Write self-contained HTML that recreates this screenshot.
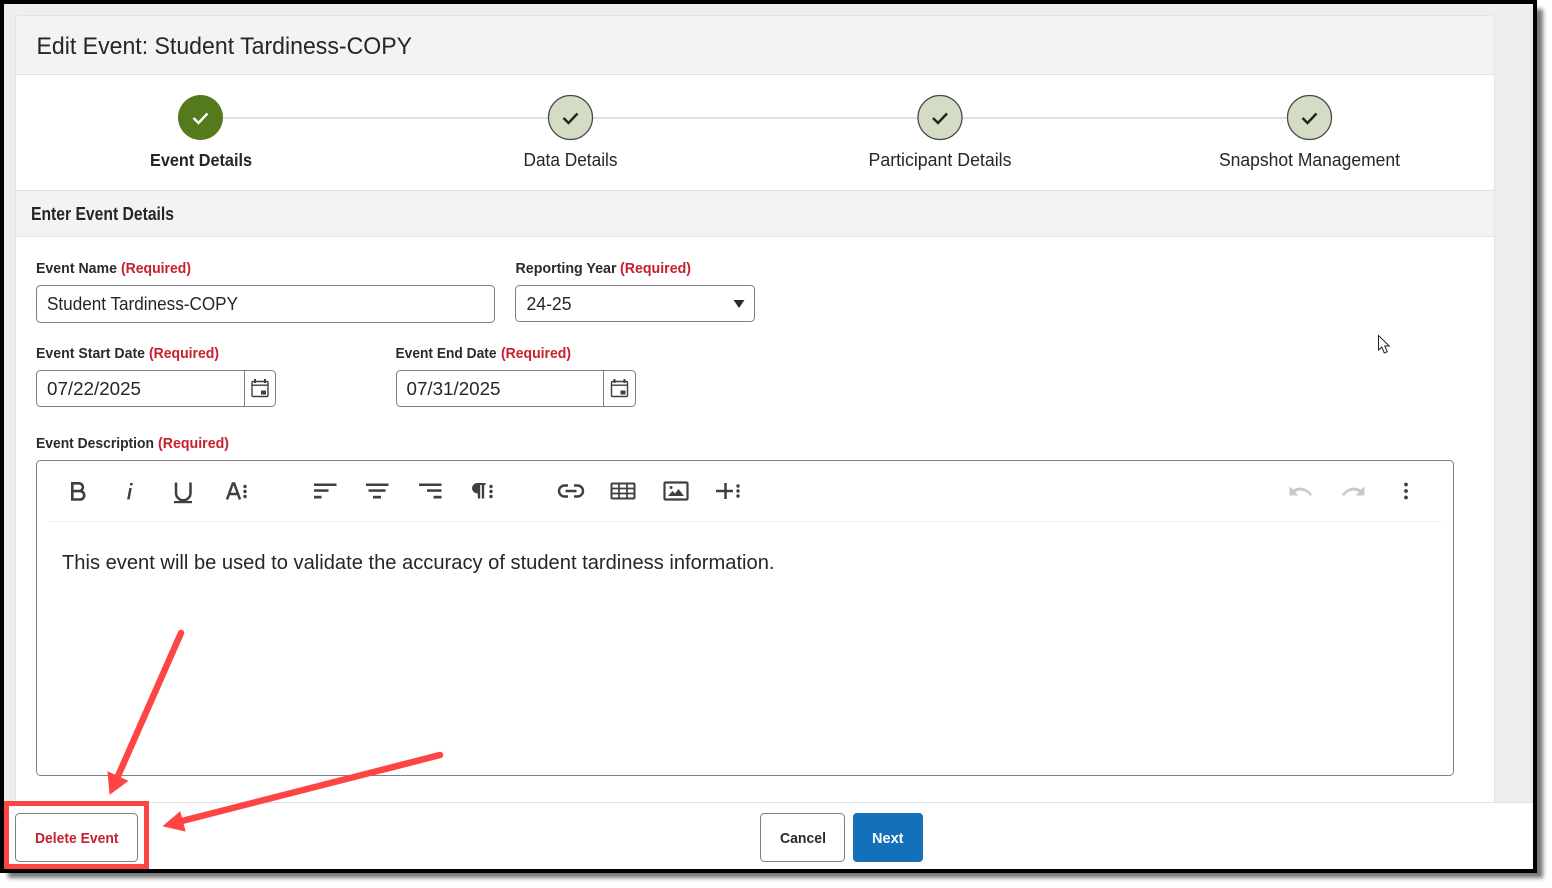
<!DOCTYPE html>
<html><head><meta charset="utf-8"><title>Edit Event</title>
<style>
html,body{margin:0;padding:0;background:#fff;width:1552px;height:888px;overflow:hidden}
svg{display:block;font-family:"Liberation Sans",sans-serif}
.t{fill:#262626}
.b{font-weight:bold}
.lab{font-size:14.8px;font-weight:bold;fill:#2b2b2b}
.req{font-size:14.8px;font-weight:bold;fill:#c5202e}
.ic{fill:none;stroke:#3f3f3f;stroke-width:2}
.f{fill:#3f3f3f}
</style></head><body>
<svg width="1552" height="888" viewBox="0 0 1552 888" xmlns="http://www.w3.org/2000/svg">
<defs><filter id="s" x="-2%" y="-2%" width="104%" height="104%"><feGaussianBlur stdDeviation="2"/></filter></defs>
<rect x="8" y="9" width="1535" height="869" fill="#777" filter="url(#s)"/>
<rect x="0" y="0" width="1537" height="873" fill="#000"/>
<rect x="4" y="4" width="1529" height="865" fill="#eeeeee"/>
<!-- panel -->
<rect x="15.500" y="15.500" width="1479" height="800" rx="4" fill="#fff" stroke="#e3e3e3"/>
<path d="M16 74V19.500a3.500 3.500 0 0 1 3.500-3.500H1490.500a3.500 3.500 0 0 1 3.500 3.500V74z" fill="#f3f3f3"/>
<rect x="16" y="74" width="1478" height="1" fill="#e2e2e2"/>
<text x="36.500" y="54" class="t" font-size="24.500" textLength="375.500" lengthAdjust="spacingAndGlyphs">Edit Event: Student Tardiness-COPY</text>
<!-- stepper -->
<rect x="223" y="117" width="1064" height="2" fill="#dfdfdf"/>
<circle cx="200.500" cy="117.500" r="22.500" fill="#557a1c"/>
<path d="M193.500 118l5 5 9-9.500" fill="none" stroke="#fff" stroke-width="2.400"/>
<g fill="#d4dcc6" stroke="#4a4a4a" stroke-width="1.300">
<circle cx="570.500" cy="117.500" r="22"/><circle cx="940" cy="117.500" r="22"/><circle cx="1309.500" cy="117.500" r="22"/>
</g>
<g fill="none" stroke="#222" stroke-width="2.400">
<path d="M563.500 118l5 5 9-9.500"/><path d="M933 118l5 5 9-9.500"/><path d="M1302.500 118l5 5 9-9.500"/>
</g>
<text x="150" y="166" class="t b" font-size="17.500" textLength="102" lengthAdjust="spacingAndGlyphs">Event Details</text>
<text x="523.500" y="166" class="t" font-size="18" textLength="94" lengthAdjust="spacingAndGlyphs">Data Details</text>
<text x="868.500" y="166" class="t" font-size="18" textLength="143" lengthAdjust="spacingAndGlyphs">Participant Details</text>
<text x="1219" y="166" class="t" font-size="18" textLength="181" lengthAdjust="spacingAndGlyphs">Snapshot Management</text>
<!-- section header -->
<rect x="16" y="190" width="1478" height="47" fill="#f3f3f3"/>
<rect x="16" y="190" width="1478" height="1" fill="#e2e2e2"/>
<rect x="16" y="236" width="1478" height="1" fill="#e2e2e2"/>
<text x="31" y="220" class="t b" font-size="18" textLength="143" lengthAdjust="spacingAndGlyphs">Enter Event Details</text>
<!-- labels -->
<text x="36" y="273" class="lab" textLength="81" lengthAdjust="spacingAndGlyphs">Event Name</text>
<text x="121" y="273" class="req" textLength="70" lengthAdjust="spacingAndGlyphs">(Required)</text>
<text x="515.500" y="273" class="lab" textLength="101" lengthAdjust="spacingAndGlyphs">Reporting Year</text>
<text x="620" y="273" class="req" textLength="71" lengthAdjust="spacingAndGlyphs">(Required)</text>
<text x="36" y="358" class="lab" textLength="109" lengthAdjust="spacingAndGlyphs">Event Start Date</text>
<text x="149" y="358" class="req" textLength="70" lengthAdjust="spacingAndGlyphs">(Required)</text>
<text x="395.500" y="358" class="lab" textLength="101" lengthAdjust="spacingAndGlyphs">Event End Date</text>
<text x="501" y="358" class="req" textLength="70" lengthAdjust="spacingAndGlyphs">(Required)</text>
<text x="36" y="448" class="lab" textLength="118" lengthAdjust="spacingAndGlyphs">Event Description</text>
<text x="158" y="448" class="req" textLength="71" lengthAdjust="spacingAndGlyphs">(Required)</text>
<!-- inputs -->
<g fill="#fff" stroke="#808080">
<rect x="36.500" y="285.500" width="458" height="37" rx="4"/>
<rect x="515.500" y="285.500" width="239" height="36" rx="4"/>
<rect x="36.500" y="370.500" width="239" height="36" rx="4"/>
<rect x="396.500" y="370.500" width="239" height="36" rx="4"/>
<rect x="36.500" y="460.500" width="1417" height="315" rx="4"/>
</g>
<rect x="244" y="371" width="1" height="35" fill="#808080"/>
<rect x="603" y="371" width="1" height="35" fill="#808080"/>
<text x="47" y="310" class="t" font-size="18" textLength="191" lengthAdjust="spacingAndGlyphs">Student Tardiness-COPY</text>
<text x="526.500" y="310" class="t" font-size="18" textLength="45" lengthAdjust="spacingAndGlyphs">24-25</text>
<path d="M733.500 300h11l-5.500 8z" fill="#2b2b2b"/>
<text x="47" y="395" class="t" font-size="18" textLength="94" lengthAdjust="spacingAndGlyphs">07/22/2025</text>
<text x="406.500" y="395" class="t" font-size="18" textLength="94" lengthAdjust="spacingAndGlyphs">07/31/2025</text>
<!-- calendar icons -->
<g>
<rect x="252" y="381.500" width="16" height="15" rx="1" class="ic" style="stroke-width:1.400"/>
<rect x="252" y="384.500" width="16" height="1.400" class="f"/>
<rect x="254" y="379" width="2" height="4" class="f"/><rect x="264" y="379" width="2" height="4" class="f"/>
<rect x="261" y="390.500" width="5" height="4" class="f"/>
</g>
<g transform="translate(359.500 0)">
<rect x="252" y="381.500" width="16" height="15" rx="1" class="ic" style="stroke-width:1.400"/>
<rect x="252" y="384.500" width="16" height="1.400" class="f"/>
<rect x="254" y="379" width="2" height="4" class="f"/><rect x="264" y="379" width="2" height="4" class="f"/>
<rect x="261" y="390.500" width="5" height="4" class="f"/>
</g>
<!-- toolbar -->
<rect x="48" y="521" width="1394" height="1" fill="#efefef"/>
<path d="M72.300 483.300h6.700a3.900 3.900 0 0 1 0 7.800h-6.700zM72.300 491.100h7.700a4.200 4.200 0 0 1 0 8.400h-7.700z" class="ic" style="stroke-width:2.600"/>
<path d="M129.300 488h2.500l-2.200 11.500h-2.500zM130.300 483h2.600l-.5 2.400h-2.600z" class="f"/>
<path d="M176 482.500v10.500a7 7 0 0 0 14.500 0v-10.500" class="ic" style="stroke-width:2.500"/>
<rect x="174" y="501" width="18" height="2.200" class="f"/>
<path d="M227 499.500l5.800-16h1.400l5.800 16M229 494h9" class="ic" style="stroke-width:2.500"/>
<g class="f"><circle cx="245" cy="486.500" r="1.700"/><circle cx="245" cy="491.500" r="1.700"/><circle cx="245" cy="496.500" r="1.700"/></g>
<g class="f">
<rect x="314" y="483.500" width="22.500" height="2.500"/><rect x="314" y="489.300" width="14.500" height="2.500"/><rect x="314" y="495.800" width="7.500" height="2.700"/>
<rect x="366" y="483.500" width="22.500" height="2.500"/><rect x="368.500" y="489.300" width="17" height="2.500"/><rect x="373" y="495.800" width="8" height="2.700"/>
<rect x="419" y="483.500" width="22.500" height="2.500"/><rect x="427" y="489.300" width="14.500" height="2.500"/><rect x="433.500" y="495.800" width="8" height="2.700"/>
</g>
<path d="M472 488.500a5.500 5.500 0 0 1 5.500-5.500h8v2h-1.300v13.500h-2.400v-13.500h-1.600v13.500h-2.400v-5a5.500 5.500 0 0 1-5.800-5z" class="f"/>
<g class="f"><circle cx="491" cy="486.500" r="1.700"/><circle cx="491" cy="491.500" r="1.700"/><circle cx="491" cy="496.500" r="1.700"/></g>
<path d="M568 485.500h-3.500a5.500 5.500 0 0 0 0 11H568M574 485.500h3.500a5.500 5.500 0 0 1 0 11H574M565.500 491h11" class="ic" style="stroke-width:2.400"/>
<rect x="611.500" y="483.500" width="23" height="15" rx="1" class="ic"/>
<path d="M611.500 488.500h23M611.500 493.500h23M619 483.500v15M627 483.500v15" class="ic" style="stroke-width:1.700"/>
<rect x="664.500" y="482.500" width="23" height="17" rx="1" class="ic" style="stroke-width:2.200"/>
<circle cx="671" cy="487.500" r="1.500" class="f"/>
<path d="M668 496l4.500-5 2.500 2.500 3.500-4.500 5.500 7z" class="f"/>
<path d="M725.500 483v16M716 491h17" class="ic" style="stroke-width:2.500"/>
<g class="f"><circle cx="738" cy="486" r="1.700"/><circle cx="738" cy="491" r="1.700"/><circle cx="738" cy="496" r="1.700"/></g>
<path d="M1289.500 486.500v9h9l-3.300-3.300c5-3 11.500-1.500 14.800 3.800l2-1.200c-4-7-12.800-9.300-18.800-5.200z" fill="#c9c9c9"/>
<path d="M1364.500 486.500v9h-9l3.300-3.300c-5-3-11.500-1.500-14.800 3.800l-2-1.200c4-7 12.800-9.300 18.800-5.200z" fill="#c9c9c9"/>
<g class="f"><circle cx="1406" cy="484.500" r="1.900"/><circle cx="1406" cy="491" r="1.900"/><circle cx="1406" cy="497.500" r="1.900"/></g>
<text x="62" y="569" class="t" font-size="20" textLength="712.500" lengthAdjust="spacingAndGlyphs">This event will be used to validate the accuracy of student tardiness information.</text>
<!-- cursor -->
<path d="M1378.500 335.500v14.500l3.300-3 2.500 6 3-1.300-2.500-5.700h4.500z" fill="#fff" stroke="#222" stroke-width="1"/>
<!-- footer -->
<rect x="4" y="802" width="1529" height="67" fill="#fff"/>
<rect x="4" y="802" width="1529" height="1" fill="#e2e2e2"/>
<rect x="15.500" y="813.500" width="122" height="48" rx="4" fill="#fff" stroke="#808080"/>
<text x="35" y="843" font-size="14.800" font-weight="bold" fill="#c5202e" textLength="83.500" lengthAdjust="spacingAndGlyphs">Delete Event</text>
<rect x="760.500" y="813.500" width="84" height="48" rx="4" fill="#fff" stroke="#808080"/>
<text x="780" y="843" font-size="14.800" font-weight="bold" fill="#2b2b2b" textLength="46" lengthAdjust="spacingAndGlyphs">Cancel</text>
<rect x="853" y="813" width="70" height="49" rx="4" fill="#1470b8"/>
<text x="872" y="843" font-size="14.800" font-weight="bold" fill="#fff" textLength="31.500" lengthAdjust="spacingAndGlyphs">Next</text>
<!-- annotations -->
<rect x="6.500" y="803.500" width="140" height="63" fill="none" stroke="#ff4444" stroke-width="5"/>
<path d="M181 633L118 776" stroke="#ff4444" stroke-width="6.500" stroke-linecap="round" fill="none"/>
<path d="M110 794l-2-22 19.500 9z" fill="#ff4444" stroke="#ff4444"/>
<path d="M440 755L178 822" stroke="#ff4444" stroke-width="6.500" stroke-linecap="round" fill="none"/>
<path d="M163.500 826l16.500-14 5 19z" fill="#ff4444" stroke="#ff4444"/>
</svg>
</body></html>
